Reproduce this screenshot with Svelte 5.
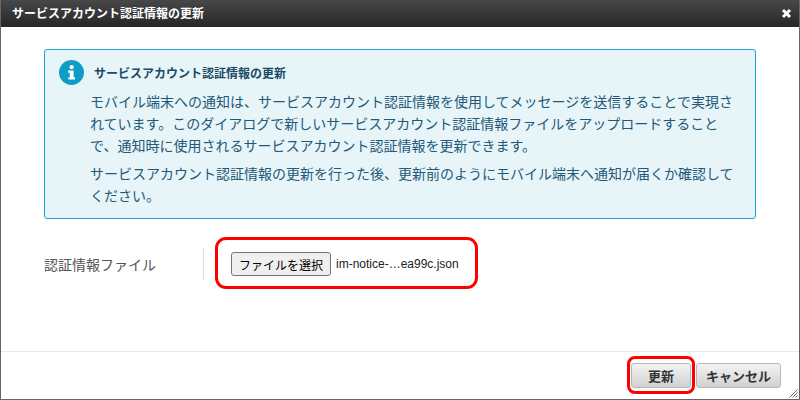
<script lang="ts">
	const paragraphs = [
		'モバイル端末への通知は、サービスアカウント認証情報を使用してメッセージを送信することで実現されています。このダイアログで新しいサービスアカウント認証情報ファイルをアップロードすることで、通知時に使用されるサービスアカウント認証情報を更新できます。',
		'サービスアカウント認証情報の更新を行った後、更新前のようにモバイル端末へ通知が届くか確認してください。',
	];
</script>

<div class="dialog">
	<header class="titlebar">
		<span class="title">サービスアカウント認証情報の更新</span>
		<svg class="close" width="11" height="11" viewBox="0 0 11 11">
			<path d="M2 2 L9 9 M9 2 L2 9" stroke="#fff" stroke-width="3" fill="none" />
		</svg>
	</header>

	<main class="body">
		<section class="info">
			<div class="info-head">
				<svg class="info-icon" width="25" height="25" viewBox="0 0 25 25">
					<circle cx="12.5" cy="12.5" r="12.5" fill="#0f9dc7" />
					<circle cx="12.7" cy="7.2" r="2.1" fill="#fff" />
					<path d="M9.2 10.6 H14.6 V17.2 H16 V19.4 H9.4 V17.2 H10.8 V12.8 H9.2 Z" fill="#fff" />
				</svg>
				<h2>サービスアカウント認証情報の更新</h2>
			</div>
			{#each paragraphs as text}
				<p>{text}</p>
			{/each}
		</section>

		<div class="field">
			<div class="label">認証情報ファイル</div>
			<div class="value">
				<div class="file">
					<button class="choose">ファイルを選択</button>
					<span class="filename">im-notice-…ea99c.json</span>
				</div>
			</div>
		</div>
	</main>

	<footer class="actions">
		<button class="btn primary">更新</button>
		<button class="btn">キャンセル</button>
		<svg class="grip" width="9" height="9" viewBox="0 0 9 9">
			<path d="M8.5 0.5 L0.5 8.5 M8.5 3.5 L3.5 8.5 M8.5 6.5 L6.5 8.5" stroke="#666" stroke-width="1" fill="none" />
		</svg>
	</footer>
</div>

<style>
	:global(body) {
		margin: 0;
	}

	.dialog {
		position: relative;
		box-sizing: border-box;
		width: 800px;
		height: 400px;
		display: flex;
		flex-direction: column;
		background: #fff;
		border: 1px solid #666;
		border-top: 0;
		font-family: 'Liberation Sans', 'Noto Sans CJK JP', sans-serif;
		overflow: hidden;
	}

	.titlebar {
		box-sizing: border-box;
		flex: none;
		height: 27px;
		display: flex;
		align-items: center;
		justify-content: space-between;
		padding: 0 7px 2px 11px;
		background: linear-gradient(#484848, #262626);
		color: #fff;
	}

	.title {
		font-size: 12px;
		font-weight: 700;
	}

	.close {
		margin-top: 2px;
	}

	.body {
		flex: 1;
		padding: 22px 43px 0;
	}

	.info {
		box-sizing: border-box;
		width: 712px;
		height: 170px;
		padding: 10px 14px 0 14px;
		background: #e7f5f8;
		border: 1px solid #19a5d0;
		border-radius: 3px;
		color: #245878;
	}

	.info-head {
		display: flex;
		align-items: center;
		gap: 10px;
		height: 25px;
		margin-bottom: 6px;
	}

	.info-icon {
		flex: none;
	}

	h2 {
		margin: 0;
		font-size: 12px;
		font-weight: 700;
		color: #1a4a66;
	}

	p {
		margin: 0 0 6px;
		padding-left: 31px;
		font-size: 14px;
		line-height: 22px;
	}

	.field {
		display: flex;
		align-items: center;
		margin-top: 28px;
		height: 34px;
	}

	.label {
		width: 159px;
		font-size: 14px;
		color: #555;
	}

	.value {
		height: 32px;
		border-left: 1px solid #ddd;
		padding-left: 11px;
		display: flex;
		align-items: center;
	}

	.file {
		box-sizing: border-box;
		display: flex;
		align-items: center;
		gap: 5px;
		width: 263px;
		height: 52px;
		margin-top: -2px;
		padding: 2px 0 0 13px;
		border: 3px solid #f00;
		border-radius: 11px;
	}

	.choose {
		box-sizing: border-box;
		width: 100px;
		height: 24px;
		padding: 0;
		background: #efefef;
		border: 1px solid #767676;
		border-radius: 3px;
		color: #000;
		font: 12px 'Liberation Sans', 'Noto Sans CJK JP', sans-serif;
	}

	.filename {
		font-size: 12px;
		color: #222;
	}

	.actions {
		position: relative;
		box-sizing: border-box;
		flex: none;
		height: 48px;
		display: flex;
		align-items: center;
		justify-content: flex-end;
		gap: 5px;
		padding: 0 18px 0 0;
		border-top: 1px solid #e8e8e8;
	}

	.btn {
		box-sizing: border-box;
		height: 25px;
		width: 85px;
		padding: 0;
		background: linear-gradient(#f4f4f4, #d0d0d0);
		border: 1px solid #b8b8b8;
		border-radius: 3px;
		color: #333;
		font: 700 13px 'Liberation Sans', 'Noto Sans CJK JP', sans-serif;
	}

	.primary {
		position: relative;
		width: 60px;
	}

	/* red highlight ring drawn over the button */
	.primary::after {
		content: '';
		position: absolute;
		inset: -8px -5px -7px -5px;
		border: 3px solid #f00;
		border-radius: 8px;
	}

	.grip {
		position: absolute;
		right: 1px;
		bottom: 1px;
	}
</style>
